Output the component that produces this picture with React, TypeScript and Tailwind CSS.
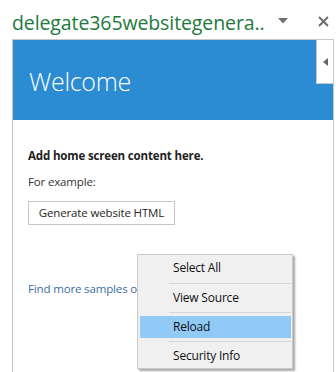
import React from "react";

const font = { fontFamily: '"Open Sans", "Noto Sans", sans-serif' };

function ContextMenu() {
  const Sep = () => (
    <div className="h-[7px] flex items-center pl-[31px] pr-[1px]">
      <div className="h-px w-full bg-[#d7d7d7]" />
    </div>
  );
  const Item = ({ label, active }: { label: string; active?: boolean }) => (
    <div
      className={`h-[22px] ml-[2px] mr-[1px] pl-[33px] flex items-center text-[12px] tracking-[-0.2px] text-[#111] ${
        active ? "bg-[#91c9f7]" : ""
      }`}
    >
      {label}
    </div>
  );
  return (
    <div className="absolute left-[137px] top-[254px] w-[156px] h-[115px] bg-[#f0f0f0] border border-[#cacaca] shadow-[2px_2px_2px_rgba(0,0,0,0.35)] pt-[2px]">
      <Item label="Select All" />
      <div className="h-[8px] flex items-center pl-[31px] pr-[1px]">
        <div className="h-px w-full bg-[#d7d7d7]" />
      </div>
      <Item label="View Source" />
      <Sep />
      <Item label="Reload" active />
      <Sep />
      <Item label="Security Info" />
    </div>
  );
}

export default function App() {
  return (
    <div
      className="relative w-[336px] h-[372px] overflow-hidden bg-white"
      style={font}
    >
      {/* title bar */}
      <div className="h-[39px] flex items-start">
        <div className="pl-[12px] pt-[10px] text-[19.5px] leading-[26px] text-[#217a3c] tracking-[-0.1px]">
          delegate365websitegenera..
        </div>
        <div className="absolute left-[278px] top-[18px]">
          <svg width="10" height="6" viewBox="0 0 10 6">
            <path d="M0 0h10L5 5.5z" fill="#707070" />
          </svg>
        </div>
        <div className="absolute left-[318px] top-[16px]">
          <svg width="11" height="11" viewBox="0 0 11 11">
            <path
              d="M1 1l9 9M10 1l-9 9"
              stroke="#6a6a6a"
              strokeWidth="1.8"
            />
          </svg>
        </div>
      </div>

      {/* task pane */}
      <div className="relative ml-[12px] w-[322px] h-[333px] border-l border-r border-t border-[#c8c8c8]">
        <div className="h-[80px] bg-[#2b8bd3] flex items-center pl-[16px] pt-[4px]">
          <span className="text-[25px] font-light text-white tracking-[-0.3px]">
            Welcome
          </span>
        </div>
        <div className="absolute right-0 top-0 w-[17px] h-[44px] bg-white border-l border-b border-[#c8c8c8] flex items-center justify-center">
          <svg width="5" height="8" viewBox="0 0 5 8">
            <path d="M5 0v8L0 4z" fill="#666" />
          </svg>
        </div>

        <div className="pl-[15px] pt-[28px] text-[11.5px] tracking-[-0.15px] text-[#222]">
          <div className="font-bold leading-[16px]">
            Add home screen content here.
          </div>
          <div className="mt-[10px] leading-[16px] text-[#333]">For example:</div>
          <div className="mt-[11px]">
            <button className="h-[24px] w-[147px] border border-[#c6c6c6] bg-white text-[11.5px] tracking-[-0.15px] text-[#262626] flex items-center justify-center">
              Generate website HTML
            </button>
          </div>
          <div className="mt-[56px] leading-[16px] text-[#3a6ea5]">
            Find more samples online.
          </div>
        </div>
      </div>

      <ContextMenu />
    </div>
  );
}
